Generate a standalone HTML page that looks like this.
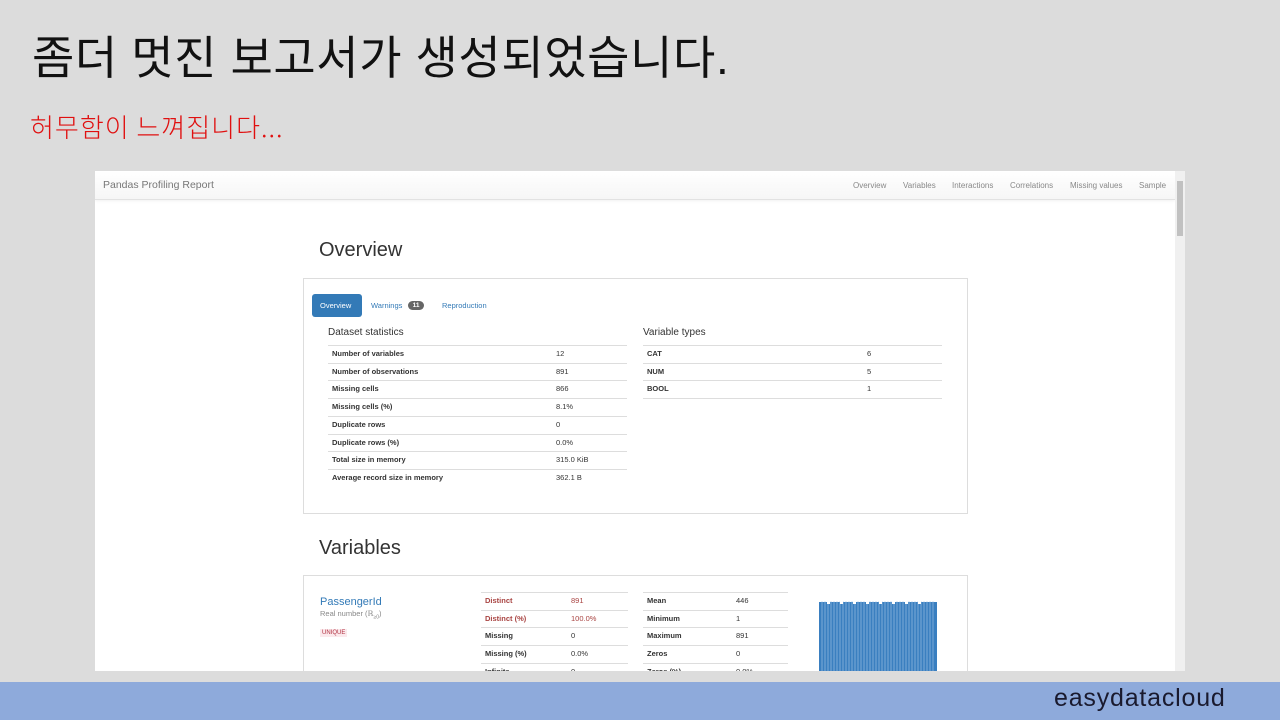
<!DOCTYPE html>
<html><head><meta charset="utf-8"><style>
*{margin:0;padding:0;box-sizing:border-box}
body{width:1280px;height:720px;background:#dcdcdc;position:relative;overflow:hidden;font-family:"Liberation Sans",Arial,sans-serif}
.a{position:absolute;white-space:nowrap}
.t1{left:32px;top:22px;font-size:46px;color:#111;font-family:"Liberation Sans","Noto Sans CJK KR",sans-serif;letter-spacing:0.6px}
.t2{left:30px;top:108px;font-size:26px;color:#e01010;font-family:"Noto Sans CJK KR",sans-serif;font-weight:300;letter-spacing:1px}
#win{position:absolute;left:95px;top:171px;width:1090px;height:500px;background:#fff;overflow:hidden}
.nav{position:absolute;left:0;top:0;width:1080px;height:29px;background:linear-gradient(#fff,#f6f6f6);border-bottom:1px solid #e2e2e2;box-shadow:0 1px 3px rgba(0,0,0,.06)}
.sb{position:absolute;left:1080px;top:0;width:10px;height:500px;background:#f0f0f0}
.th{position:absolute;left:2px;top:10px;width:6px;height:55px;background:#c1c1c1}
.n{font-size:8px;color:#888;top:10px}
.h{font-size:20px;color:#333}
.box{position:absolute;border:1px solid #ddd;background:#fff}
.s{font-size:7.5px;color:#333}
.b{font-weight:bold}
.row{position:absolute;height:1px;background:#ddd}
</style></head><body>
<div class="a t1">좀더 멋진 보고서가 생성되었습니다.</div>
<div class="a t2">허무함이 느껴집니다...</div>
<div id="win">
<div class="nav"></div>
<div class="a" style="left:8px;top:8px;font-size:10.5px;color:#777">Pandas Profiling Report</div>
<div class="a n" style="left:758px">Overview</div>
<div class="a n" style="left:808px">Variables</div>
<div class="a n" style="left:857px">Interactions</div>
<div class="a n" style="left:915px">Correlations</div>
<div class="a n" style="left:975px">Missing values</div>
<div class="a n" style="left:1044px">Sample</div>
<div class="sb"><div class="th"></div></div>
<div class="a h" style="left:224px;top:68px">Overview</div>
<div class="box" style="left:208px;top:107px;width:665px;height:236px"></div>
<div class="a" style="left:217px;top:123px;width:50px;height:23px;background:#337ab7;border-radius:3px"></div>
<div class="a s" style="left:225px;top:130px;color:#fff">Overview</div>
<div class="a s" style="left:276px;top:130px;color:#337ab7">Warnings</div>
<div class="a" style="left:313px;top:130px;width:16px;height:9px;background:#666;border-radius:5px;color:#fff;font-size:6.5px;font-weight:bold;text-align:center;line-height:9px">11</div>
<div class="a s" style="left:347px;top:130px;color:#337ab7">Reproduction</div>
<div class="a" style="left:233px;top:156px;font-size:10px;color:#333">Dataset statistics</div>
<div class="a" style="left:548px;top:156px;font-size:10px;color:#333">Variable types</div>
<div class="a h" style="left:224px;top:366px">Variables</div>
<div class="box" style="left:208px;top:404px;width:665px;height:110px"></div>
<div class="a" style="left:225px;top:425px;font-size:11px;color:#337ab7">PassengerId</div>
<div class="a" style="left:225px;top:438px;font-size:7.5px;color:#888">Real number (ℝ<sub style="font-size:5px">≥0</sub>)</div>
<div class="a" style="left:225px;top:458px;font-size:6px;color:#b03040;background:#fbe9ec;padding:1px 2px">UNIQUE</div>
<svg class="a" style="left:724px;top:430px" width="118" height="70"><rect x="0" y="1" width="118" height="69" fill="#3a7fc0"/><g stroke="#a8c8e6" stroke-width="0.6"><path d="M3 0V70M6 0V70M9 0V70M12 0V70M15 0V70M18 0V70M21 0V70M24 0V70M27 0V70M30 0V70M33 0V70M36 0V70M39 0V70M42 0V70M45 0V70M48 0V70M51 0V70M54 0V70M57 0V70M60 0V70M63 0V70M66 0V70M69 0V70M72 0V70M75 0V70M78 0V70M81 0V70M84 0V70M87 0V70M90 0V70M93 0V70M96 0V70M99 0V70M102 0V70M105 0V70M108 0V70M111 0V70M114 0V70"/></g><g fill="#fff"><rect x="8" y="0" width="3" height="3"/><rect x="21" y="0" width="3" height="3"/><rect x="34" y="0" width="3" height="3"/><rect x="47" y="0" width="3" height="3"/><rect x="60" y="0" width="3" height="3"/><rect x="73" y="0" width="3" height="3"/><rect x="86" y="0" width="3" height="3"/><rect x="99" y="0" width="3" height="3"/></g></svg>
<div id="t"></div>
</div>
<div class="a" style="left:0;top:682px;width:1280px;height:38px;background:#8eaadb"></div>
<div class="a" style="left:1054px;top:684px;font-size:25px;color:#1a1a2e;letter-spacing:0.8px">easydatacloud</div>
<script>
var h='';
var L=[["Number of variables","12"],["Number of observations","891"],["Missing cells","866"],["Missing cells (%)","8.1%"],["Duplicate rows","0"],["Duplicate rows (%)","0.0%"],["Total size in memory","315.0 KiB"],["Average record size in memory","362.1 B"]];
L.forEach(function(c,i){var y=178+i*17.7;h+='<div class="row" style="left:233px;top:'+(y-4)+'px;width:299px"></div><div class="a s b" style="left:237px;top:'+y+'px">'+c[0]+'</div><div class="a s" style="left:461px;top:'+y+'px">'+c[1]+'</div>';});
[["CAT","6"],["NUM","5"],["BOOL","1"]].forEach(function(c,i){var y=178+i*17.7;h+='<div class="row" style="left:548px;top:'+(y-4)+'px;width:299px"></div><div class="a s b" style="left:552px;top:'+y+'px">'+c[0]+'</div><div class="a s" style="left:772px;top:'+y+'px">'+c[1]+'</div>';});
h+='<div class="row" style="left:548px;top:227px;width:299px"></div>';
var A=[["Distinct","891",1],["Distinct (%)","100.0%",1],["Missing","0"],["Missing (%)","0.0%"],["Infinite","0"]],B=[["Mean","446"],["Minimum","1"],["Maximum","891"],["Zeros","0"],["Zeros (%)","0.0%"]];
A.forEach(function(c,i){var y=425+i*17.7,col=c[2]?'#a94442':'#333';h+='<div class="row" style="left:386px;top:'+(y-4)+'px;width:147px"></div><div class="a s b" style="left:390px;top:'+y+'px;color:'+col+'">'+c[0]+'</div><div class="a s" style="left:476px;top:'+y+'px;color:'+col+'">'+c[1]+'</div>';});
B.forEach(function(c,i){var y=425+i*17.7;h+='<div class="row" style="left:548px;top:'+(y-4)+'px;width:145px"></div><div class="a s b" style="left:552px;top:'+y+'px">'+c[0]+'</div><div class="a s" style="left:641px;top:'+y+'px">'+c[1]+'</div>';});
document.getElementById('t').innerHTML=h;
</script>
</body></html>
